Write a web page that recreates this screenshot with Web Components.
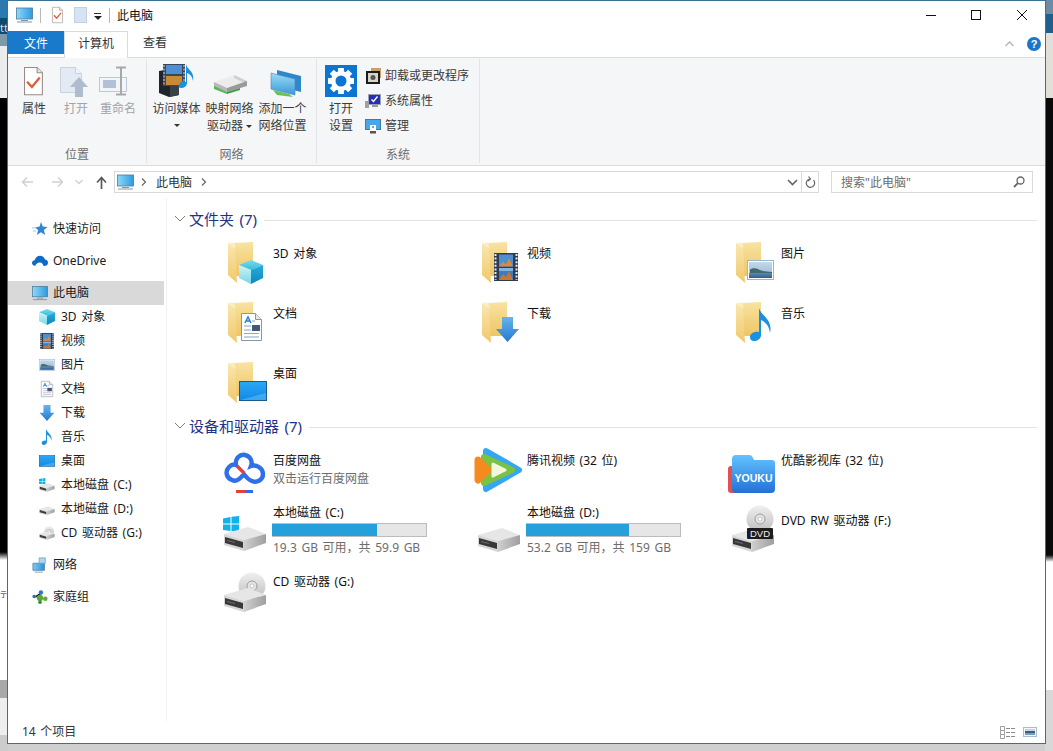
<!DOCTYPE html>
<html lang="zh">
<head>
<meta charset="utf-8">
<title>此电脑</title>
<style>
  html, body { margin: 0; height: 751px; overflow: hidden; }
  body {
    position: relative;
    font: 12px/18px "Noto Sans", "Noto Sans CJK SC", sans-serif;
    word-spacing: 1.5px;
    color: #1a1a1a;
    background-color: #cfcfcf;
    background-image:
      linear-gradient(#2a7ab0 0 18px, #0e4a6e 18px 34px, #7f98a8 34px 46px, #ececec 46px 98px, #000 98px 552px, #fff 560px 680px, #a9a9a9 680px 698px, #eee 698px 735px, #ccc 735px),
      linear-gradient(#6d8ba3 0 14px, #1e5f8c 14px 33px, #e2dfd8 33px 98px, #0a0a0a 98px 555px, #fff 562px 690px, #d8d8d8 690px);
    background-size: 8px 100%, 8px 100%;
    background-position: left top, right top;
    background-repeat: no-repeat;
  }
  .behind { position: absolute; left: 0; top: 586px; font-size: 7px; color: #222; }
  .behind2 { position: absolute; left: 0; top: 19px; font-size: 11px; color: #ddd; }
</style>
</head>
<body>
<span class="behind">亍</span><span class="behind2">tt</span>

<explorer-window>
  <win-titlebar slot="title">此电脑</win-titlebar>
  <ribbon-tabs slot="tabs"></ribbon-tabs>
  <ribbon-bar slot="ribbon">
    <ribbon-group label="位置" width="139" pad="5">
      <ribbon-button icon="r-props" width="42">属性</ribbon-button>
      <ribbon-button icon="r-open" width="42" disabled>打开</ribbon-button>
      <ribbon-button icon="r-rename" width="42" disabled>重命名</ribbon-button>
    </ribbon-group>
    <ribbon-group label="网络" width="170" pad="3">
      <ribbon-button icon="r-media" width="53">访问媒体<br><drop-arrow block></drop-arrow></ribbon-button>
      <ribbon-button icon="r-map" width="53">映射网络<br>驱动器<drop-arrow></drop-arrow></ribbon-button>
      <ribbon-button icon="r-net" width="53">添加一个<br>网络位置</ribbon-button>
    </ribbon-group>
    <ribbon-group label="系统" width="163" pad="3">
      <ribbon-button icon="r-gear" width="42">打开<br>设置</ribbon-button>
      <ribbon-list>
        <ribbon-small icon="s-uninstall">卸载或更改程序</ribbon-small>
        <ribbon-small icon="s-sys">系统属性</ribbon-small>
        <ribbon-small icon="s-manage">管理</ribbon-small>
      </ribbon-list>
    </ribbon-group>
  </ribbon-bar>
  <address-bar slot="address"></address-bar>
  <nav-pane slot="nav">
    <nav-item icon="n-star">快速访问</nav-item>
    <nav-item icon="n-cloud" gap>OneDrive</nav-item>
    <nav-item icon="monitor" gap selected>此电脑</nav-item>
    <nav-item icon="n-cube" child>3D 对象</nav-item>
    <nav-item icon="n-film" child>视频</nav-item>
    <nav-item icon="n-pic" child>图片</nav-item>
    <nav-item icon="n-doc" child>文档</nav-item>
    <nav-item icon="n-down" child>下载</nav-item>
    <nav-item icon="n-note" child>音乐</nav-item>
    <nav-item icon="n-desk" child>桌面</nav-item>
    <nav-item icon="n-drivec" child>本地磁盘 (C:)</nav-item>
    <nav-item icon="n-drive" child>本地磁盘 (D:)</nav-item>
    <nav-item icon="n-cd" child>CD 驱动器 (G:)</nav-item>
    <nav-item icon="n-net" gap>网络</nav-item>
    <nav-item icon="n-home" gap>家庭组</nav-item>
  </nav-pane>
  <item-section slot="main" rows="60px 60px 57px">
    <span slot="head">文件夹 (7)</span>
    <file-tile icon="f-cube" pad="6">3D 对象</file-tile>
    <file-tile icon="f-film" pad="6">视频</file-tile>
    <file-tile icon="f-pic" pad="6">图片</file-tile>
    <file-tile icon="f-doc" pad="6">文档</file-tile>
    <file-tile icon="f-down" pad="6">下载</file-tile>
    <file-tile icon="f-note" pad="6">音乐</file-tile>
    <file-tile icon="f-desk" pad="6">桌面</file-tile>
  </item-section>
  <item-section slot="main" rows="58px 61px 61px" gridgap="9">
    <span slot="head">设备和驱动器 (7)</span>
    <file-tile icon="baidu" pad="7">百度网盘<span slot="sub">双击运行百度网盘</span></file-tile>
    <file-tile icon="tencent" pad="7">腾讯视频 (32 位)</file-tile>
    <file-tile icon="youku" pad="7">优酷影视库 (32 位)</file-tile>
    <file-tile icon="drive-c" pad="1" used="105">本地磁盘 (C:)<span slot="sub">19.3 GB 可用，共 59.9 GB</span></file-tile>
    <file-tile icon="drive-d" pad="1" used="103">本地磁盘 (D:)<span slot="sub">53.2 GB 可用，共 159 GB</span></file-tile>
    <file-tile icon="dvd" pad="9">DVD RW 驱动器 (F:)</file-tile>
    <file-tile icon="cd" pad="9">CD 驱动器 (G:)</file-tile>
  </item-section>
  <status-bar slot="status">14 个项目</status-bar>
</explorer-window>

<script>
// artwork for every icon, [viewBox, markup]
const grad = (id, a, b, h) =>
  `<linearGradient id="${id}" x1="0" y1="0" x2="${h ? 1 : 0}" y2="${h ? 0 : 1}"><stop offset="0" stop-color="${a}"/><stop offset="1" stop-color="${b}"/></linearGradient>`;

const cube = `<defs>${grad('ct', '#7adcec', '#35bde0')}${grad('cl', '#d4f3f7', '#72d8e6')}${grad('cr', '#26aedb', '#0f86bd')}</defs>
  <polygon points="12,0 24,5 12,10 0,5" fill="url(#ct)"/><polygon points="0,5 12,10 12,24 0,18" fill="url(#cl)"/><polygon points="24,5 24,18 12,24 12,10" fill="url(#cr)"/>`;
const film = `<rect width="24" height="28" fill="#2f3b52"/>
  <path d="M1.5 1v26M22.5 1v26" stroke="#e8ecf2" stroke-width="2" stroke-dasharray="2 1.6"/>
  <rect x="5" y="1.5" width="14" height="12" fill="#4d8fd0"/><path d="M5 13.5l4-5 3 3 3-6 4 8z" fill="#d98a3a"/>
  <rect x="5" y="15" width="14" height="12" fill="#3a7cc4"/><path d="M5 27l4-6 3 3 3-6 4 9z" fill="#c9762e"/><rect x="5" y="15" width="14" height="3" fill="#7cb5e4"/>`;
const pic = `<defs>${grad('sky', '#c4d9ea', '#8fb2d2')}${grad('sea', '#5f88b4', '#2f5c92')}</defs><rect x=".5" y=".5" width="26" height="19" fill="#fff" stroke="#9db4cf"/>
  <rect x="2" y="2" width="23" height="16" fill="url(#sky)"/><path d="M3 9.5c4-2.5 7-1 10 .5 4 1.5 8 1.5 12 2v1H3z" fill="#3f6a70"/><rect x="2" y="13" width="23" height="5" fill="url(#sea)"/>`;
const doc = `<path d="M.5.5h14l6 6v21H.5z" fill="#fff" stroke="#8e959c"/><path d="M14.5.5v6h6" fill="#e4e8ec" stroke="#8e959c"/>
  <path d="M4 10l3-6 3 6M5 8h4" fill="none" stroke="#2d7fd0" stroke-width="1.5"/><path d="M11 8h3M3 13h7M3 17h7M3 24h15" stroke="#7ea4cc"/><path d="M3 20.5h15" stroke="#d98aa0"/>
  <rect x="11" y="12" width="8" height="6" fill="#3d5a78"/>`;
const arrow = `<defs>${grad('ar', '#66b5ee', '#2478cc')}</defs><polygon points="6,0 17,0 17,12 23,12 11.5,25 0,12 6,12" fill="url(#ar)"/>`;
const note = `<path d="M9 0C11 8 23 11 20 25 19 17 15 14 11 12V27C11 31 7 33 4 33 1 33 0 31 0 29 0 26 4 23 9 24Z" fill="#1a90e2"/>`;
const desk = `<defs>${grad('dk', '#2aa8f6', '#1288e4')}</defs><rect x=".5" y=".5" width="27" height="19" fill="url(#dk)" stroke="#1e5a8c"/><path d="M1 19L27 12V19Z" fill="#58bdf8" opacity=".6"/>`;
const folder = `<defs>${grad('fa', '#f8e3a0', '#efc564')}${grad('fb', '#fae7ae', '#f0c86c')}</defs>
  <polygon points="12,4 31,3 31,37 12,37" fill="url(#fa)"/><polygon points="6,4 13,9 15,44 6,36" fill="url(#fb)"/><polygon points="6,4 12,3.5 14,10 13,9" fill="#fbeec2"/>`;
const at = (x, y, w, art, s = 1) => `<g transform="translate(${x} ${y}) scale(${s})">${art}</g>`;

const drive = `<defs>${grad('dr', '#cfcfcf', '#9f9f9f', 1)}</defs>
  <polygon points="1,8 25,1 43,8 21,14" fill="#e6e6e6"/><polygon points="1,8 21,14 21,25 1,19" fill="#d6d6d6"/>
  <polygon points="21,14 43,8 43,17 21,25" fill="url(#dr)"/><polygon points="2,11 20,16 20,22 2,17" fill="#383838"/><polygon points="4,14 12,16 12,17 4,15" fill="#6d6d6d"/>`;
const disc = `<defs>${grad('ds', '#f0f0f0', '#bdbdbd')}</defs><circle cx="14" cy="14" r="13.5" fill="url(#ds)"/><circle cx="14" cy="14" r="5" fill="#e4e4e4" stroke="#9d9d9d"/><circle cx="14" cy="14" r="2" fill="#fff" stroke="#aaa" stroke-width=".6"/>`;
const winLogo = `<path d="M0 2.5L7.5 1v6.5H0zM8.5.8L16 0v7.5H8.5zM0 8.5h7.5V15L0 14zM8.5 8.5H16V16l-7.5-1z" fill="#12b2e8"/>`;
const monitor = `<defs>${grad('sc', '#8ed8f8', '#2f9be0', 1)}</defs><rect x="0.5" y="1" width="16" height="11" fill="url(#sc)" stroke="#4c7a9c" stroke-width=".8"/><path d="M5 13.5h7M1 15h15" stroke="#8096a8"/>`;
const check = `<path d="M.5.5h12l5 5v21H.5z" fill="#fff" stroke="#9a8b82"/><path d="M12.5.5v5h5" fill="#e8e4e0" stroke="#9a8b82"/><path d="M3 14l4.5 5L15 10" fill="none" stroke="#dc5f3a" stroke-width="2.2"/>`;
let teeth = '';
for (let a = 0; a < 360; a += 45) teeth += `<rect x="-2.9" y="-13" width="5.8" height="6" transform="rotate(${a})" fill="#fff"/>`;

const ART = {
  monitor: ['0 0 17 16', monitor],
  check: ['0 0 18 27', check],
  blank: ['0 0 13 16', `<rect x=".5" y=".5" width="12" height="15" fill="#d6e3f5" stroke="#c2d0e4"/>`],
  'f-cube': ['0 0 48 48', folder + at(17, 21, 24, cube)],
  'f-film': ['0 0 48 48', folder + at(18, 14, 24, film)],
  'f-pic': ['0 0 48 48', folder + at(17, 21, 27, pic)],
  'f-doc': ['0 0 48 48', folder + at(19, 14, 21, doc)],
  'f-down': ['0 0 48 48', folder + at(20, 18, 23, arrow)],
  'f-note': ['0 0 48 48', folder + at(20, 9, 22, note)],
  'f-desk': ['0 0 48 48', folder + at(17, 22, 28, desk)],
  baidu: ['0 0 48 48', `<rect x="1" y="2" width="44" height="46" rx="5" fill="#fefefe"/>
    <path d="M21 30C18 34 14 37 10 35 4 33 3 26 7 22 9 20 12 19 14 20 13 13 18 9 23 10 28 11 31 16 29 21 34 19 41 23 41 29 41 35 35 38 30 36 26 35 24 32 21 28" fill="none" stroke="#2f6fe8" stroke-width="4.4"/>
    <path d="M15 21L22 28" stroke="#e5403a" stroke-width="3.4"/><rect x="14" y="45" width="9" height="3" fill="#e5403a"/><rect x="23" y="45" width="8" height="3" fill="#2f6fe8"/>`],
  tencent: ['0 0 48 48', `<polygon points="10,6 43,25 10,44" fill="#35a7f2" stroke="#35a7f2" stroke-width="6" stroke-linejoin="round"/>
    <polygon points="8,12 36,25 8,38" fill="#7cc242" stroke="#7cc242" stroke-width="6" stroke-linejoin="round"/>
    <polygon points="2,15 12,25 2,35" fill="#f58a1f" stroke="#f58a1f" stroke-width="7" stroke-linejoin="round"/>
    <polygon points="17,19 29,25 17,31" fill="#f0f7dc" stroke="#f0f7dc" stroke-width="3" stroke-linejoin="round"/>`],
  youku: ['0 0 48 48', `<defs>${grad('yk', '#62c4ff', '#2470d6')}</defs><rect x="-2" y="21" width="10" height="27" rx="3" fill="#e2504f"/>
    <path d="M2 14Q2 10 6 10H19Q22 10 23 13L24 15H42Q45 15 45 18V44Q45 48 41 48H6Q2 48 2 44Z" fill="url(#yk)"/>
    <text x="23.5" y="37" text-anchor="middle" font-family="Liberation Sans" font-weight="700" font-size="10.5" fill="#fff" textLength="38" lengthAdjust="spacingAndGlyphs" word-spacing="0">YOUKU</text>`],
  'drive-c': ['0 0 48 48', at(1, 13, 16, winLogo) + at(1, 23, 44, drive)],
  'drive-d': ['0 0 48 48', at(1, 24, 44, drive)],
  dvd: ['0 0 48 48', at(16, 2, 28, disc) + at(1, 24, 44, drive) +
    `<rect x="17" y="25" width="26" height="11" rx="1" fill="#1c1c1c"/><text x="30" y="34" text-anchor="middle" font-family="Liberation Sans" font-size="9.5" fill="#eee" word-spacing="0">DVD</text>`],
  cd: ['0 0 48 48', at(16, 8, 28, disc) + at(1, 23, 44, drive)],
  'n-star': ['0 0 16 16', `<path d="M9 1l1.8 4.4L15.5 6l-3.6 3 1.2 5L9 11.2 4.8 14l1.4-5L3 6.5l4.6-1z" fill="#2f86d6"/><path d="M0 7h3M1 10h3" stroke="#9cc6ea"/>`],
  'n-cloud': ['0 0 18 14', `<path d="M3.5 12.5C1.5 12.5 0 11 0 9.3 0 7.6 1.3 6.3 3 6.2 3.6 3 6.2 1 9 1 11.6 1 14 2.7 14.6 5.2 16.6 5.4 18 7 18 9 18 11 16.5 12.5 14.5 12.5Z" fill="#0d6bc4"/><path d="M3.5 12.5C4.5 10 6.5 8.5 9 8.7c2 .2 3.5 1.8 4 3.8z" fill="#fff"/>`],
  'n-cube': ['0 0 24 24', cube],
  'n-film': ['0 0 24 28', film],
  'n-pic': ['0 0 27 20', pic],
  'n-doc': ['0 0 21 28', doc],
  'n-down': ['0 0 23 25', arrow],
  'n-note': ['0 0 22 33', note],
  'n-desk': ['0 0 28 20', desk],
  'n-drivec': ['0 0 44 38', at(0, 0, 18, winLogo, 1.1) + at(0, 13, 44, drive)],
  'n-drive': ['0 0 44 38', at(0, 11, 44, drive)],
  'n-cd': ['0 0 44 38', at(14, 0, 28, disc) + at(0, 13, 44, drive)],
  'n-net': ['0 0 18 18', `<defs>${grad('nn', '#7cc8f4', '#2f8fd8', 1)}</defs><path d="M1 7h13v8H1z" fill="url(#nn)" stroke="#4b7ba0" stroke-width=".8"/><path d="M8 1h7v6H8z" fill="#a6d8f4" stroke="#6e9cbc" stroke-width=".8"/><path d="M3 17h9" stroke="#7f97aa"/>`],
  'n-home': ['0 0 18 16', `<path d="M3 7.5L9 9L10 3M9 9L15 10M9 9V14" stroke="#4d9a48"/><circle cx="2.5" cy="7.5" r="2" fill="#1f6fc0"/><circle cx="10" cy="3" r="2.5" fill="#2a7cc8"/><circle cx="15" cy="10" r="2.5" fill="#64a832"/><circle cx="9" cy="9" r="3.5" fill="#5aa83a"/><circle cx="9" cy="14" r="2" fill="#2f8c44"/>`],
  // ribbon icons share a 40x38 box anchored at the top of the button
  'r-props': ['0 0 40 38', at(10, 5, 18, check, 1.05)],
  'r-open': ['0 0 40 38', `<path d="M4.5 5.5h15l6 6v19h-21z" fill="#e3eaf3" stroke="#c6d2e0"/><path d="M19.5 5.5v6h6" fill="#f1f4f8" stroke="#c6d2e0"/><polygon points="23,15 32,25 27,25 27,35 19,35 19,25 14,25" fill="#aebcce"/>`],
  'r-rename': ['0 0 40 38', `<rect x="1.5" y="15.5" width="27" height="14" fill="#f2f5f9" stroke="#b9c7d8"/><rect x="5" y="18" width="13" height="8" fill="#b2c1d6"/><path d="M18 5.5h10M23 5.5v27M18 32.5h10" fill="none" stroke="#a8a8a8" stroke-width="2"/>`],
  'r-media': ['0 0 40 38', `<polygon points="2,9 13,7 22,9 22,33 12,35 2,31" fill="#20242b"/><polygon points="13,12 22,10 22,33 13,35" fill="#3a4048"/>
    <rect x="6" y="2" width="22" height="22" fill="#38465e"/><rect x="9" y="3" width="16" height="9" fill="#4d8fd0"/><rect x="9" y="14" width="16" height="9" fill="#c98a35"/><path d="M7 3v20M27 3v20" stroke="#dde" stroke-dasharray="2 1.5"/>
    <path d="M29 2C30 8 38 9 36 19 35 14 33 12 30 11V21C30 24 27 26 24 26 21 26 21 23 23 21 25 19 27 19 29 20Z" fill="#1a90e2"/>`],
  'r-map': ['0 0 40 38', `<polygon points="4,20 24,13 37,19 17,26" fill="#ececec"/><polygon points="24,13 37,19 37,22 24,16" fill="#cfcfcf"/><polygon points="4,20 17,26 17,30 4,25" fill="#b8b8b8"/><polygon points="17,26 37,19 37,24 17,30" fill="#9a9a9a"/><polygon points="4,24 17,30 17,32 4,27" fill="#58b55a"/><polygon points="17,30 30,26 30,28 17,32" fill="#3f9a46"/>`],
  'r-net': ['0 0 40 38', `<defs>${grad('rn', '#9adcf6', '#3a98d8')}</defs><polygon points="14,8 38,14 38,30 14,24" fill="#2f86c8"/><polygon points="8,11 32,17 32,33 8,27" fill="url(#rn)" stroke="#4c86ac" stroke-width=".6"/><polygon points="10,28 26,32 30,35 14,33" fill="#6abf5a"/>`],
  'r-gear': ['0 0 32 32', `<rect width="32" height="32" fill="#0b75d2"/><g transform="translate(16 16)">${teeth}<circle r="7.8" fill="none" stroke="#fff" stroke-width="4.6"/></g>`],
  's-uninstall': ['0 0 16 16', `<rect x="6" y="0" width="10" height="10" fill="#c9a06a"/><rect x="1" y="3" width="14" height="13" fill="#1c1c1c"/><rect x="3" y="5" width="10" height="9" fill="#d8d4c8"/><circle cx="8" cy="9.5" r="2.5" fill="#555"/>`],
  's-sys': ['0 0 16 16', `<rect x="0" y="8" width="4" height="7" fill="#a0a0a0"/><rect x="3.5" y="1.5" width="12" height="10" fill="#2430b0" stroke="#9aa0b8"/><path d="M6.5 6.5l2 2 4-5" fill="none" stroke="#fff" stroke-width="1.4"/><path d="M7 13h6" stroke="#999" stroke-width="2"/>`],
  's-manage': ['0 0 16 16', `<rect x="0.5" y="1.5" width="15" height="10" fill="#4aa6e8" stroke="#3a7cae"/><path d="M5 13h6v2.5H5z" fill="#555"/><rect x="5" y="7" width="6" height="6" fill="#fff"/><path d="M7 9h2" stroke="#333"/>`]
};

class AppIcon extends HTMLElement {
  constructor() {
    super();
    this.attachShadow({ mode: 'open' });
  }
  connectedCallback() {
    const [vb, art] = ART[this.getAttribute('name')];
    const w = this.getAttribute('w') || 16;
    const h = this.getAttribute('h') || w;
    this.shadowRoot.innerHTML = `
      <style>:host { display: block; width: ${w}px; height: ${h}px; flex: none; } svg { display: block; overflow: visible; }</style>
      <svg width="${w}" height="${h}" viewBox="${vb}">${art}</svg>`;
  }
}

class ExplorerWindow extends HTMLElement {
  constructor() {
    super();
    this.attachShadow({ mode: 'open' }).innerHTML = `
      <style>
        :host {
          display: flex; flex-direction: column; position: relative;
          box-sizing: border-box; width: 1039px; height: 744px; margin-left: 7px;
          background: #fff; border: 1px solid #3d6f92;
        }
        .body { flex: 1; display: flex; min-height: 0; }
        .main { flex: 1; padding: 11px 8px 0 0; min-width: 0; }
      </style>
      <slot name="title"></slot>
      <slot name="tabs"></slot>
      <slot name="ribbon"></slot>
      <slot name="address"></slot>
      <div class="body"><slot name="nav"></slot><div class="main"><slot name="main"></slot></div></div>
      <slot name="status"></slot>`;
  }
}

class WinTitlebar extends HTMLElement {
  constructor() {
    super();
    this.attachShadow({ mode: 'open' }).innerHTML = `
      <style>
        :host { display: flex; align-items: center; height: 28px; padding-left: 8px; color: #111; }
        .sep { width: 1px; height: 15px; background: #b9b9b9; margin: 0 7px; }
        .drop { display: flex; flex-direction: column; align-items: center; gap: 2px; width: 9px; margin: 2px 0 0 6px; }
        .drop i { display: block; width: 7px; height: 1px; background: #333; }
        .drop b { border: 4px solid transparent; border-top-color: #222; border-bottom: 0; }
        .title { flex: 1; padding-top: 2px; }
        .ctl { display: flex; }
        .ctl svg { display: block; }
      </style>
      <app-icon name="monitor" w="17" h="16"></app-icon>
      <span class="sep"></span>
      <app-icon name="check" w="11" h="16" style="margin-left:4px"></app-icon>
      <app-icon name="blank" w="13" h="16" style="margin-left:11px"></app-icon>
      <span class="drop"><i></i><b></b></span>
      <span class="sep"></span>
      <span class="title"><slot></slot></span>
      <span class="ctl">
        <svg width="46" height="28"><path d="M1 14.5h10" stroke="#111" fill="none"/></svg>
        <svg width="46" height="28"><rect x="0.5" y="9.5" width="9" height="9" stroke="#111" fill="none"/></svg>
        <svg width="28" height="28"><path d="M0 9l10 10M10 9L0 19" stroke="#111" fill="none"/></svg>
      </span>`;
  }
}

class RibbonTabs extends HTMLElement {
  constructor() {
    super();
    this.attachShadow({ mode: 'open' }).innerHTML = `
      <style>
        :host { display: flex; height: 29px; box-sizing: border-box; border-bottom: 1px solid #dadbdc; padding-top: 2px; }
        .file { width: 56px; height: 23px; background: #1979ca; color: #fff; text-align: center; line-height: 25px; }
        .tab { width: 64px; height: 27px; line-height: 24px; text-align: center; box-sizing: border-box; color: #333; }
        .on { background: #fff; border: 1px solid #dadbdc; border-bottom: 0; height: 27px; }
        .fill { flex: 1; display: flex; justify-content: flex-end; align-items: center; gap: 13px; padding: 0 4px 1px 0; }
        .help { width: 14px; height: 14px; border-radius: 50%; background: #1b75c9; color: #fff; font: 700 11px/14px "Liberation Sans", sans-serif; text-align: center; }
      </style>
      <div class="file">文件</div>
      <div class="tab on">计算机</div>
      <div class="tab" style="width:54px">查看</div>
      <div class="fill">
        <svg width="9" height="6"><path d="M.5 5l4-4 4 4" fill="none" stroke="#b8b8b8" stroke-width="1.5"/></svg>
        <span class="help">?</span>
      </div>`;
  }
}

class RibbonBar extends HTMLElement {
  constructor() {
    super();
    this.attachShadow({ mode: 'open' }).innerHTML = `
      <style>:host { display: flex; height: 108px; box-sizing: border-box; background: #f5f6f7; border-bottom: 1px solid #dadbdc; }</style>
      <slot></slot>`;
  }
}

class RibbonGroup extends HTMLElement {
  constructor() {
    super();
    this.attachShadow({ mode: 'open' });
  }
  connectedCallback() {
    this.shadowRoot.innerHTML = `
      <style>
        :host { display: flex; flex-direction: column; box-sizing: border-box; width: ${this.getAttribute('width')}px; border-right: 1px solid #e2e3e4; margin: 1px 0 2px; }
        .items { flex: 1; display: flex; padding: 3px 0 0 ${this.getAttribute('pad')}px; }
        .label { height: 17px; text-align: center; color: #6d6d6d; line-height: 18px; }
      </style>
      <div class="items"><slot></slot></div>
      <div class="label">${this.getAttribute('label')}</div>`;
  }
}

class RibbonButton extends HTMLElement {
  constructor() {
    super();
    this.attachShadow({ mode: 'open' });
  }
  connectedCallback() {
    const icon = this.getAttribute('icon');
    const gear = icon === 'r-gear';
    this.shadowRoot.innerHTML = `
      <style>
        :host { display: block; width: ${this.getAttribute('width')}px; text-align: center; line-height: 17px; white-space: nowrap; color: ${this.hasAttribute('disabled') ? '#a3a3a3' : '#3c3c3c'}; }
        .icon { height: 38px; display: flex; justify-content: center; align-items: ${gear ? 'flex-end' : 'flex-start'}; }
        .text { margin: 0 -6px; }
      </style>
      <div class="icon"><app-icon name="${icon}" w="${gear ? 32 : 40}" h="${gear ? 32 : 38}" ${gear ? 'style="margin-bottom:3px"' : ''}></app-icon></div>
      <div class="text"><slot></slot></div>`;
  }
}

class DropArrow extends HTMLElement {
  constructor() {
    super();
    this.attachShadow({ mode: 'open' });
  }
  connectedCallback() {
    const block = this.hasAttribute('block');
    this.shadowRoot.innerHTML = `
      <style>
        :host { display: ${block ? 'block' : 'inline-block'}; vertical-align: middle; line-height: 0; margin-left: ${block ? 0 : 3}px; }
        i { display: inline-block; border: 3px solid transparent; border-top-color: #333; border-bottom: 0; vertical-align: top; ${block ? 'margin-top:7px' : ''} }
      </style><i></i>`;
  }
}

class RibbonList extends HTMLElement {
  constructor() {
    super();
    this.attachShadow({ mode: 'open' }).innerHTML = `
      <style>:host { display: flex; flex-direction: column; margin-left: 3px; margin-top: 1px; }</style>
      <slot></slot>`;
  }
}

class RibbonSmall extends HTMLElement {
  constructor() {
    super();
    this.attachShadow({ mode: 'open' });
  }
  connectedCallback() {
    this.shadowRoot.innerHTML = `
      <style>:host { display: flex; align-items: center; gap: 4px; height: 25px; color: #3c3c3c; white-space: nowrap; }</style>
      <app-icon name="${this.getAttribute('icon')}" w="16"></app-icon><slot></slot>`;
  }
}

class AddressBar extends HTMLElement {
  constructor() {
    super();
    this.attachShadow({ mode: 'open' }).innerHTML = `
      <style>
        :host { display: flex; align-items: flex-start; height: 32px; box-sizing: border-box; padding-top: 5px; color: #333; }
        .nav { display: flex; width: 106px; height: 22px; align-items: center; flex: none; }
        .nav svg { display: block; }
        .box { display: flex; align-items: center; height: 22px; box-sizing: border-box; border: 1px solid #d9d9d9; flex: none; }
        .path { width: 688px; padding-left: 2px; }
        .crumb { margin: 0 9px; padding-top: 2px; }
        .grow { flex: 1; }
        .refresh { width: 17px; justify-content: center; border-left-width: 0; }
        .search { width: 202px; margin-left: 12px; padding: 0 7px 0 9px; color: #6d6d6d; }
        .search .grow { padding-top: 2px; }
      </style>
      <div class="nav">
        <svg width="13" height="12" style="margin-left:13px"><path d="M12 6H2M6 1.5L1.5 6 6 10.5" fill="none" stroke="#d0d0d0" stroke-width="1.5"/></svg>
        <svg width="13" height="12" style="margin-left:17px"><path d="M1 6h10M7 1.5L11.5 6 7 10.5" fill="none" stroke="#d0d0d0" stroke-width="1.5"/></svg>
        <svg width="8" height="6" style="margin-left:11px"><path d="M.5 1L4 4.5 7.5 1" fill="none" stroke="#d0d0d0" stroke-width="1.3"/></svg>
        <svg width="13" height="13" style="margin-left:12px"><path d="M6.5 13V2M2 6.5L6.5 1.5 11 6.5" fill="none" stroke="#5a5a5a" stroke-width="1.7"/></svg>
      </div>
      <div class="box path">
        <app-icon name="monitor" w="17" h="16"></app-icon>
        <svg width="6" height="8" style="margin-left:7px"><path d="M1 .5L4.5 4 1 7.5" fill="none" stroke="#666" stroke-width="1.2"/></svg>
        <span class="crumb">此电脑</span>
        <svg width="6" height="8"><path d="M1 .5L4.5 4 1 7.5" fill="none" stroke="#666" stroke-width="1.2"/></svg>
        <span class="grow"></span>
        <svg width="11" height="7" style="margin-right:3px"><path d="M1 1l4.5 4.5L10 1" fill="none" stroke="#666" stroke-width="1.7"/></svg>
      </div>
      <div class="box refresh">
        <svg width="11" height="13"><path d="M8.5 4.2A4.2 4.2 0 1 1 4.5 3M3.5 .5L5.500 3 3 5" fill="none" stroke="#666" stroke-width="1.2"/></svg>
      </div>
      <div class="box search">
        <span class="grow">搜索"此电脑"</span>
        <svg width="12" height="12"><circle cx="7.5" cy="4.5" r="3.5" fill="none" stroke="#666" stroke-width="1.3"/><path d="M5 7l-4 4" stroke="#666" stroke-width="1.8"/></svg>
      </div>`;
  }
}

class NavPane extends HTMLElement {
  constructor() {
    super();
    this.attachShadow({ mode: 'open' }).innerHTML = `
      <style>:host { display: block; width: 159px; flex: none; box-sizing: border-box; border-right: 1px solid #f0f0f0; padding-top: 19px; }</style>
      <slot></slot>`;
  }
}

class NavItem extends HTMLElement {
  constructor() {
    super();
    this.attachShadow({ mode: 'open' });
  }
  connectedCallback() {
    const child = this.hasAttribute('child');
    this.shadowRoot.innerHTML = `
      <style>
        :host {
          display: flex; align-items: center; height: 24px; width: 156px; box-sizing: border-box; white-space: nowrap;
          gap: ${child ? 6 : 5}px; padding-left: ${child ? 31 : 24}px;
          margin-top: ${this.hasAttribute('gap') ? 8 : 0}px;
          background: ${this.hasAttribute('selected') ? '#d9d9d9' : 'transparent'};
        }
      </style>
      <app-icon name="${this.getAttribute('icon')}" w="16" h="16"></app-icon><slot></slot>`;
  }
}

class ItemSection extends HTMLElement {
  constructor() {
    super();
    this.attachShadow({ mode: 'open' });
  }
  connectedCallback() {
    this.shadowRoot.innerHTML = `
      <style>
        :host { display: block; }
        .head { display: flex; align-items: center; height: 20px; padding-left: 7px; font-size: 15px; color: #1e3287; white-space: nowrap; }
        .head svg { margin-right: 3px; flex: none; }
        .line { flex: 1; height: 1px; background: #e2e2e2; margin: 2px 0 0 7px; }
        .grid { display: grid; grid-template-columns: repeat(3, 254px); grid-template-rows: ${this.getAttribute('rows')};
                margin: ${this.getAttribute('gridgap') || 10}px 0 0 55px; }
      </style>
      <div class="head">
        <svg width="12" height="8"><path d="M1 1l5 5 5-5" fill="none" stroke="#7d7d7d"/></svg>
        <slot name="head"></slot><span class="line"></span>
      </div>
      <div class="grid"><slot></slot></div>`;
  }
}

class FileTile extends HTMLElement {
  constructor() {
    super();
    this.attachShadow({ mode: 'open' });
  }
  connectedCallback() {
    const used = this.getAttribute('used');
    this.shadowRoot.innerHTML = `
      <style>
        :host { display: flex; gap: 3px; color: #111; white-space: nowrap; }
        .text { padding-top: ${this.getAttribute('pad')}px; }
        .bar { width: 155px; height: 14px; box-sizing: border-box; margin: 1px 0 2px -1px; background: #e6e6e6; border: 1px solid #bcbcbc; border-left: 0; }
        .bar div { height: 100%; background: #26a0da; }
        ::slotted([slot=sub]) { color: #6d6d6d; display: block; }
      </style>
      <app-icon name="${this.getAttribute('icon')}" w="48"></app-icon>
      <div class="text">
        <slot></slot>
        ${used ? `<div class="bar"><div style="width:${used}px"></div></div>` : ''}
        <slot name="sub"></slot>
      </div>`;
  }
}

class StatusBar extends HTMLElement {
  constructor() {
    super();
    this.attachShadow({ mode: 'open' }).innerHTML = `
      <style>
        :host { display: flex; align-items: center; height: 22px; padding: 0 8px 0 14px; color: #333; }
        .grow { flex: 1; }
        svg { display: block; flex: none; }
      </style>
      <span class="grow"><slot></slot></span>
      <svg width="16" height="13"><path d="M.5.5h4v4h-4zM.5 4.5h4v4h-4zM.5 8.5h4v4h-4z" fill="none" stroke="#a0a0a0"/><path d="M6 2.5h4M11 2.5h4M6 6.5h4M11 6.5h4M6 10.5h4M11 10.5h4" stroke="#8a8a8a"/></svg>
      <svg width="14" height="10" style="margin-left:7px"><rect x=".5" y=".5" width="13" height="9" fill="#f4f7fa" stroke="#a9bcd0"/><rect x="2" y="2" width="10" height="2" fill="#c3d6e6"/><rect x="2" y="4" width="10" height="2" fill="#3d6076"/><rect x="2" y="6" width="10" height="2" fill="#7b9cc0"/></svg>`;
  }
}

customElements.define('app-icon', AppIcon);
customElements.define('explorer-window', ExplorerWindow);
customElements.define('win-titlebar', WinTitlebar);
customElements.define('ribbon-tabs', RibbonTabs);
customElements.define('ribbon-bar', RibbonBar);
customElements.define('ribbon-group', RibbonGroup);
customElements.define('ribbon-button', RibbonButton);
customElements.define('drop-arrow', DropArrow);
customElements.define('ribbon-list', RibbonList);
customElements.define('ribbon-small', RibbonSmall);
customElements.define('address-bar', AddressBar);
customElements.define('nav-pane', NavPane);
customElements.define('nav-item', NavItem);
customElements.define('item-section', ItemSection);
customElements.define('file-tile', FileTile);
customElements.define('status-bar', StatusBar);
</script>
</body>
</html>
